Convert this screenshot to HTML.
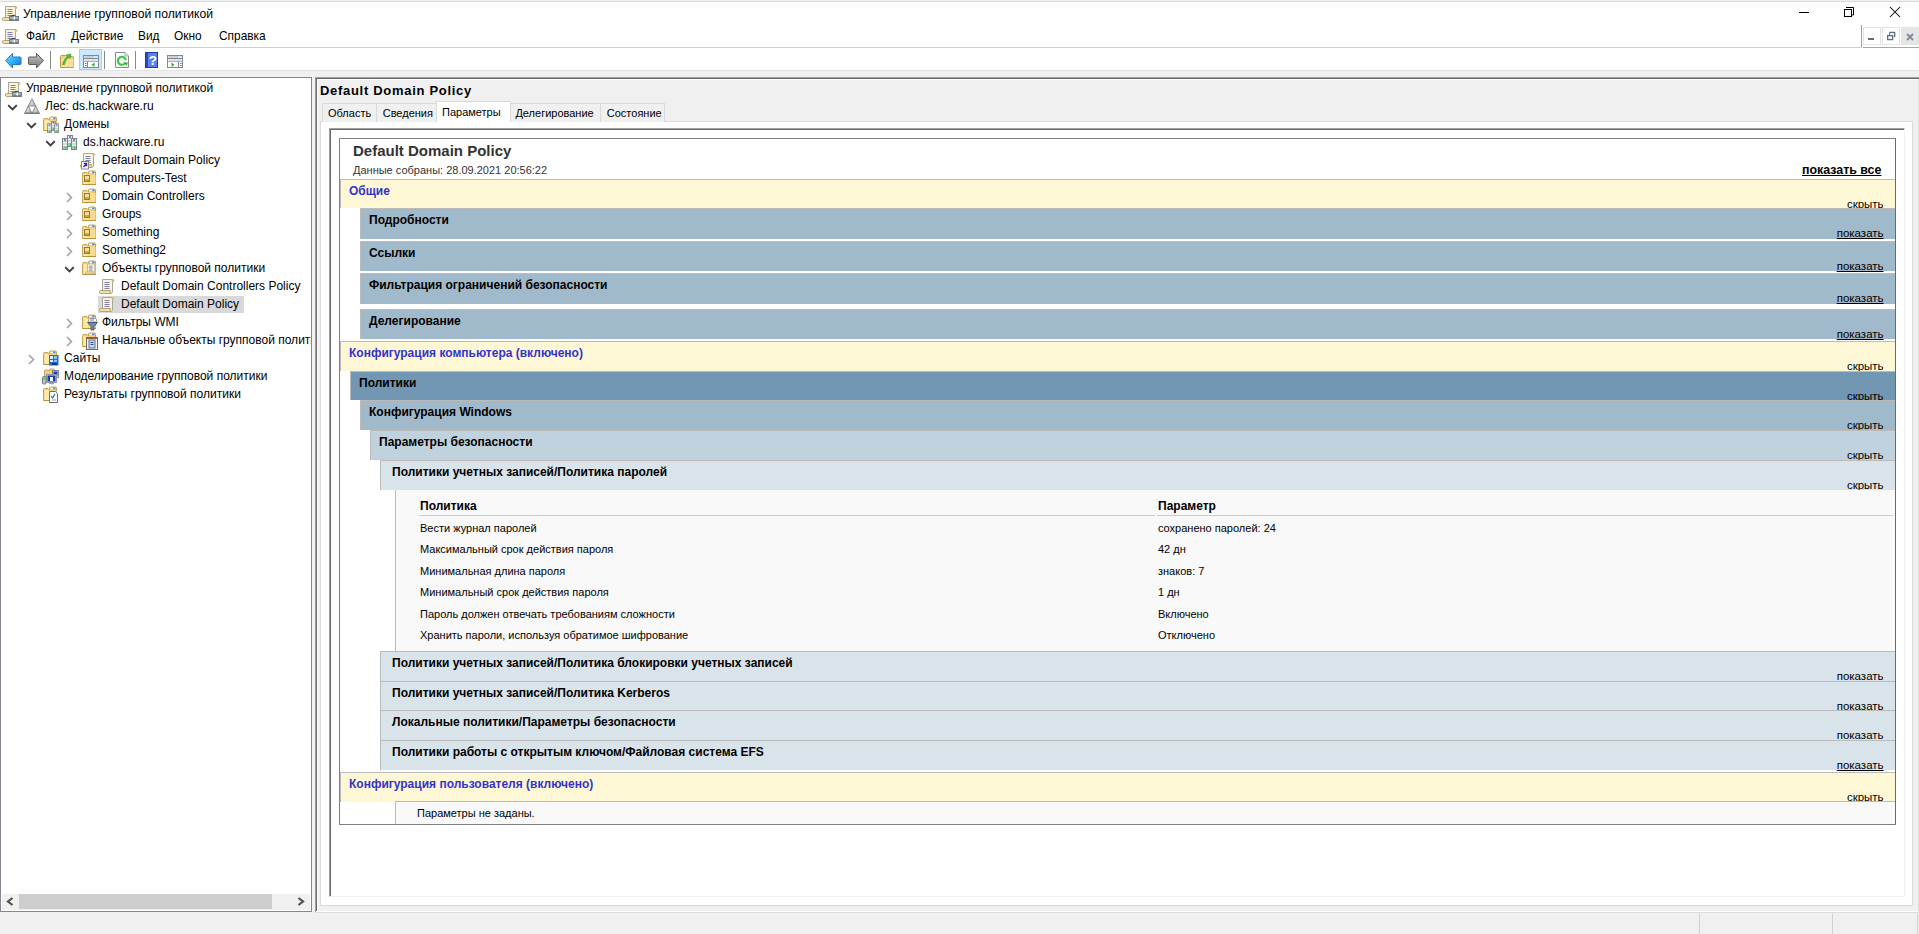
<!DOCTYPE html><html><head><meta charset="utf-8"><style>html,body{margin:0;padding:0}body{width:1919px;height:934px;overflow:hidden;position:relative;background:#f0f0f0;font-family:"Liberation Sans", sans-serif}.r{position:absolute;box-sizing:border-box}.t{position:absolute;white-space:nowrap}</style></head><body>
<div class="r" style="left:0px;top:0px;width:1919px;height:27px;background:#fff"></div>
<div class="r" style="left:0px;top:0px;width:1919px;height:1px;background:#f0f0f0"></div>
<div class="r" style="left:0px;top:1px;width:1919px;height:1px;background:#d9d9d9"></div>
<svg class="r" style="left:2px;top:5px" width="17" height="17" viewBox="0 0 17 17"><g transform="translate(0,1) scale(1.0)"><path d="M3.5 0.5h10l1 1.2-1 0.8v10.5l-1 1.5H3.5z" fill="#fbf3d6" stroke="#a9a69a"/><circle cx="14" cy="1.5" r="1.3" fill="#d2b86e"/><path d="M5.5 3.5h5M5.5 5.5h5M5.5 7.5h5M5.5 9.5h5" stroke="#8080a8" stroke-width="1"/><path d="M1.5 11.5h10l-0.5 1.5 0.5 1.5h-10q-1 0-1-1.5t1-1.5z" fill="#f2e2a6" stroke="#b3a276"/></g><path d="M9.5 11.5q2-2.5 4 0" stroke="#3a3a3a" stroke-width="1.2" fill="none"/><rect x="7" y="11" width="10" height="5" fill="#6f7d86"/><rect x="8" y="12" width="8" height="2" fill="#a6b2ba"/><rect x="11.5" y="11.5" width="1.5" height="3" fill="#fff"/></svg>
<div class="t" style="left:23px;top:7.27px;font-size:12.2px;line-height:15px;color:#000;">Управление групповой политикой</div>
<div class="r" style="left:1799px;top:12px;width:10px;height:1px;background:#000"></div>
<svg class="r" style="left:1843px;top:6px" width="12" height="12" viewBox="0 0 12 12"><rect x="1.5" y="3.5" width="7" height="7" fill="none" stroke="#000"/><path d="M3 1.5h7.5v7.5H8.5" fill="none" stroke="#000"/></svg>
<svg class="r" style="left:1889px;top:6px" width="12" height="12" viewBox="0 0 12 12"><path d="M1 1l10 10M11 1L1 11" stroke="#000" stroke-width="1.05"/></svg>
<div class="r" style="left:0px;top:27px;width:1919px;height:20px;background:#fff"></div>
<svg class="r" style="left:2px;top:28px" width="17" height="17" viewBox="0 0 17 17"><g transform="translate(0,1) scale(1.0)"><path d="M3.5 0.5h10l1 1.2-1 0.8v10.5l-1 1.5H3.5z" fill="#fbf3d6" stroke="#a9a69a"/><circle cx="14" cy="1.5" r="1.3" fill="#d2b86e"/><path d="M5.5 3.5h5M5.5 5.5h5M5.5 7.5h5M5.5 9.5h5" stroke="#8080a8" stroke-width="1"/><path d="M1.5 11.5h10l-0.5 1.5 0.5 1.5h-10q-1 0-1-1.5t1-1.5z" fill="#f2e2a6" stroke="#b3a276"/></g><path d="M9.5 11.5q2-2.5 4 0" stroke="#3a3a3a" stroke-width="1.2" fill="none"/><rect x="7" y="11" width="10" height="5" fill="#6f7d86"/><rect x="8" y="12" width="8" height="2" fill="#a6b2ba"/><rect x="11.5" y="11.5" width="1.5" height="3" fill="#fff"/></svg>
<div class="t" style="left:26px;top:29.38px;font-size:11.9px;line-height:15px;color:#000;">Файл</div>
<div class="t" style="left:71px;top:29.38px;font-size:11.9px;line-height:15px;color:#000;">Действие</div>
<div class="t" style="left:138px;top:29.38px;font-size:11.9px;line-height:15px;color:#000;">Вид</div>
<div class="t" style="left:174px;top:29.38px;font-size:11.9px;line-height:15px;color:#000;">Окно</div>
<div class="t" style="left:219px;top:29.38px;font-size:11.9px;line-height:15px;color:#000;">Справка</div>
<div class="r" style="left:0px;top:47px;width:1862px;height:1px;background:#cfcfcf"></div>
<div class="r" style="left:1861px;top:25px;width:1px;height:22px;background:#a0a0a0"></div>
<div class="r" style="left:1863px;top:47px;width:56px;height:1px;background:#a8a8a8"></div>
<div class="r" style="left:1863px;top:27px;width:18px;height:18px;border:1px solid #e3e3e3;background:#fff"></div>
<div class="r" style="left:1868px;top:38px;width:6px;height:2px;background:#5f6e7e"></div>
<div class="r" style="left:1882px;top:27px;width:18px;height:18px;border:1px solid #e3e3e3;background:#fff"></div>
<svg class="r" style="left:1886px;top:31px" width="10" height="10" viewBox="0 0 10 10"><rect x="1.6" y="4.6" width="5" height="4" fill="none" stroke="#5f6e7e" stroke-width="1.3"/><path d="M3.3 1.4h5.9M8.6 1.4v4.6" stroke="#5f6e7e" stroke-width="1.4"/><path d="M3.6 1.4v2.6" stroke="#5f6e7e" stroke-width="1.1"/></svg>
<div class="r" style="left:1901px;top:27px;width:18px;height:18px;background:#e5e5e5"></div>
<svg class="r" style="left:1906px;top:33px" width="8" height="8" viewBox="0 0 8 8"><path d="M1 1l6 6M7 1l-6 6" stroke="#7c8a98" stroke-width="1.8"/></svg>
<div class="r" style="left:0px;top:48px;width:1919px;height:22px;background:#fff"></div>
<div class="r" style="left:0px;top:70px;width:1919px;height:1px;background:#e3e3e3"></div>
<svg class="r" style="left:5px;top:53px" width="17" height="16" viewBox="0 0 17 16"><defs><linearGradient id="gb" x1="0" y1="0" x2="1" y2="1"><stop offset="0" stop-color="#8ad8ff"/><stop offset="0.5" stop-color="#30b0f8"/><stop offset="1" stop-color="#0a70d0"/></linearGradient></defs><path d="M0.5 7.5L7.5 0.5v3.5h8l0.5 0.5v6.5l-0.5 0.5h-8v3.5z" fill="url(#gb)" stroke="#2a78c0"/></svg>
<svg class="r" style="left:28px;top:53px" width="17" height="16" viewBox="0 0 17 16"><defs><linearGradient id="gf" x1="0" y1="0" x2="0" y2="1"><stop offset="0" stop-color="#c4c4c4"/><stop offset="1" stop-color="#7a7a7a"/></linearGradient></defs><path d="M15.5 7.5L8.5 0.5v3.5h-7.5l-0.5 0.5v6.5l0.5 0.5h7.5v3.5z" fill="url(#gf)" stroke="#5a5a5a"/></svg>
<div class="r" style="left:50px;top:51px;width:1px;height:18px;background:#8a8a8a"></div>
<svg class="r" style="left:60px;top:52px" width="16" height="17" viewBox="0 0 16 17"><path d="M0.5 15.5V4.5q0-1 1-1h4l1 1h6q1 0 1 1v10z" fill="#f3d080" stroke="#c09a48"/><rect x="1.5" y="7" width="12" height="8" fill="#fbe09a"/><path d="M2.5 12.5q1-5 5-8l-1.5-1.5 5-1-1 4.5-1.2-1.2q-3.5 2.5-4.3 7.2z" fill="#46c846" stroke="#2a9a2a" stroke-width="0.6"/></svg>
<div class="r" style="left:79px;top:49px;width:23px;height:21px;background:#cce8ff;border:1px solid #99d1ff"></div>
<svg class="r" style="left:83px;top:55px" width="16" height="13" viewBox="0 0 16 13"><rect x="0.5" y="0.5" width="15" height="12" fill="#fff" stroke="#7f8894"/><path d="M1.5 2h10" stroke="#b8c0c8" stroke-width="1.5"/><path d="M12.5 2h1M14 2h0.5" stroke="#b8c0c8" stroke-width="1.5"/><path d="M0.5 3.5h15" stroke="#7f8894"/><path d="M1.5 5h13" stroke="#c8d0d8" stroke-width="1.2"/><path d="M0.5 6.5h15" stroke="#aab2ba"/><path d="M4.5 6.5v6" stroke="#7f8894"/><path d="M2 8.5h1.5M2 10.5h1.5" stroke="#3a78c8" stroke-width="1.2"/><path d="M11.5 7.5v4.5L8.5 9.75z" fill="#34b034"/></svg>
<div class="r" style="left:104px;top:51px;width:1px;height:18px;background:#8a8a8a"></div>
<svg class="r" style="left:115px;top:52px" width="14" height="16" viewBox="0 0 14 16"><path d="M0.5 0.5h9.5l3.5 3.5v11.5H0.5z" fill="#fafafa" stroke="#8a8a8a"/><path d="M10 0.5v3.5h3.5" fill="#e8e8e8" stroke="#aaa"/><path d="M10.2 11a4 4 0 1 1 0.6-3" fill="none" stroke="#3cc83c" stroke-width="2.2"/><path d="M8.5 10.5h4.5l-1.5 3z" fill="#2aa82a"/></svg>
<div class="r" style="left:135px;top:51px;width:1px;height:18px;background:#8a8a8a"></div>
<svg class="r" style="left:145px;top:52px" width="13" height="16" viewBox="0 0 13 16"><rect width="13" height="16" fill="#1c3aa8"/><rect x="3" y="1" width="9" height="14" fill="#5b80e8"/><rect x="1" y="1" width="2" height="14" fill="#2a4ab8"/><text x="7.8" y="13.2" font-size="13.5" font-family="Liberation Sans" font-weight="bold" fill="#fff" text-anchor="middle">?</text></svg>
<svg class="r" style="left:167px;top:55px" width="16" height="13" viewBox="0 0 16 13"><rect x="0.5" y="0.5" width="15" height="12" fill="#fff" stroke="#7f8894"/><path d="M1.5 2h10" stroke="#b8c0c8" stroke-width="1.5"/><path d="M12.5 2h1M14 2h0.5" stroke="#b8c0c8" stroke-width="1.5"/><path d="M0.5 3.5h15" stroke="#7f8894"/><path d="M1.5 5h13" stroke="#c8d0d8" stroke-width="1.2"/><path d="M0.5 6.5h15" stroke="#aab2ba"/><path d="M11.5 6.5v6" stroke="#7f8894"/><path d="M13 8.5h1.5M13 10.5h1.5" stroke="#3a78c8" stroke-width="1.2"/><path d="M4.5 7.5v4.5l3-2.25z" fill="#34b034"/></svg>
<div class="r" style="left:0px;top:77px;width:312px;height:835px;background:#fff;border:1px solid #828790"></div>
<div class="r" style="left:2px;top:894px;width:308px;height:16px;background:#f0f0f0"></div>
<div class="r" style="left:19px;top:894px;width:253px;height:15px;background:#cdcdcd"></div>
<svg class="r" style="left:6px;top:897px" width="8" height="9" viewBox="0 0 8 9"><path d="M6.5 1L2 4.5 6.5 8" stroke="#505050" stroke-width="2.2" fill="none"/></svg>
<svg class="r" style="left:297px;top:897px" width="8" height="9" viewBox="0 0 8 9"><path d="M1.5 1L6 4.5 1.5 8" stroke="#505050" stroke-width="2.2" fill="none"/></svg>
<div class="r" style="left:1px;top:78px;width:310px;height:815px;overflow:hidden">
</div>
<svg class="r" style="left:5px;top:81px" width="17" height="17" viewBox="0 0 17 17"><g transform="translate(0,1) scale(1.0)"><path d="M3.5 0.5h10l1 1.2-1 0.8v10.5l-1 1.5H3.5z" fill="#fbf3d6" stroke="#a9a69a"/><circle cx="14" cy="1.5" r="1.3" fill="#d2b86e"/><path d="M5.5 3.5h5M5.5 5.5h5M5.5 7.5h5M5.5 9.5h5" stroke="#8080a8" stroke-width="1"/><path d="M1.5 11.5h10l-0.5 1.5 0.5 1.5h-10q-1 0-1-1.5t1-1.5z" fill="#f2e2a6" stroke="#b3a276"/></g><path d="M9.5 11.5q2-2.5 4 0" stroke="#3a3a3a" stroke-width="1.2" fill="none"/><rect x="7" y="11" width="10" height="5" fill="#6f7d86"/><rect x="8" y="12" width="8" height="2" fill="#a6b2ba"/><rect x="11.5" y="11.5" width="1.5" height="3" fill="#fff"/></svg>
<div class="t" style="left:26px;top:81.04px;font-size:12px;line-height:15px;color:#000;">Управление групповой политикой</div>
<svg class="r" style="left:7px;top:104px" width="11" height="7" viewBox="0 0 11 7"><path d="M1.2 1.2l4.3 4.3 4.3-4.3" stroke="#3c3c3c" stroke-width="1.9" fill="none"/></svg>
<svg class="r" style="left:24px;top:98px" width="16" height="16" viewBox="0 0 16 16"><defs><linearGradient id="gt" x1="0" y1="0" x2="1" y2="1"><stop offset="0" stop-color="#f8f8f8"/><stop offset="1" stop-color="#a8a8a8"/></linearGradient></defs><path d="M8 0.8L11.8 8H4.2z" fill="url(#gt)" stroke="#8a8a8a"/><path d="M4.2 8L8 15.3H0.6z" fill="url(#gt)" stroke="#8a8a8a"/><path d="M11.8 8L15.4 15.3H8z" fill="url(#gt)" stroke="#8a8a8a"/><path d="M0.6 15.3h14.8" stroke="#707070" stroke-width="1.2"/></svg>
<div class="t" style="left:45px;top:99.04px;font-size:12px;line-height:15px;color:#000;">Лес: ds.hackware.ru</div>
<svg class="r" style="left:26px;top:122px" width="11" height="7" viewBox="0 0 11 7"><path d="M1.2 1.2l4.3 4.3 4.3-4.3" stroke="#3c3c3c" stroke-width="1.9" fill="none"/></svg>
<svg class="r" style="left:42px;top:116px" width="18" height="18" viewBox="0 0 18 18"><path d="M1.5 13.5V3.5q0-1 1-1h3.5l1.5 1.5V2q0-1 1-1h5q1 0 1 1v12.5H1.5z" fill="#f0cf7e" stroke="#c9a457"/><rect x="8.5" y="1.8" width="3" height="1.2" fill="#fff"/><rect x="11" y="1.6" width="2.5" height="1.6" rx="0.8" fill="#4a90e8"/><path d="M2.5 4v10h5V5.5L6 4z" fill="#fde9a8"/><rect x="7" y="5" width="7.5" height="9" fill="#f9db8e"/><path d="M1.5 14.5h13.5" stroke="#b8923e"/><g transform="translate(5,5) scale(0.8)"><rect x="5.5" y="0.5" width="5" height="11" fill="#b9c1c8" stroke="#7a848c"/><rect x="6" y="1" width="4" height="2" fill="#e6eaee"/><rect x="7" y="1.5" width="2" height="1" fill="#1e2a34"/><rect x="6" y="4" width="4" height="1.5" fill="#f6f8fa"/><rect x="6" y="6.5" width="4" height="1.5" fill="#f0f2f4"/><rect x="7.5" y="8.5" width="2" height="2" fill="#22e022"/><rect x="0.5" y="3.5" width="5" height="11" fill="#b9c1c8" stroke="#7a848c"/><rect x="1" y="4" width="4" height="2" fill="#e6eaee"/><rect x="2" y="4.5" width="2" height="1" fill="#1e2a34"/><rect x="1" y="7" width="4" height="1.5" fill="#f6f8fa"/><rect x="1" y="9.5" width="4" height="1.5" fill="#f0f2f4"/><rect x="2.5" y="11.5" width="2" height="2" fill="#22e022"/><rect x="9.5" y="3.5" width="5" height="11" fill="#b9c1c8" stroke="#7a848c"/><rect x="10" y="4" width="4" height="2" fill="#e6eaee"/><rect x="11" y="4.5" width="2" height="1" fill="#1e2a34"/><rect x="10" y="7" width="4" height="1.5" fill="#f6f8fa"/><rect x="10" y="9.5" width="4" height="1.5" fill="#f0f2f4"/><rect x="11.5" y="11.5" width="2" height="2" fill="#22e022"/></g></svg>
<div class="t" style="left:64px;top:117.04px;font-size:12px;line-height:15px;color:#000;">Домены</div>
<svg class="r" style="left:45px;top:140px" width="11" height="7" viewBox="0 0 11 7"><path d="M1.2 1.2l4.3 4.3 4.3-4.3" stroke="#3c3c3c" stroke-width="1.9" fill="none"/></svg>
<svg class="r" style="left:62px;top:135px" width="16" height="16" viewBox="0 0 16 16"><g transform="translate(0,0) scale(1)"><rect x="5.5" y="0.5" width="5" height="11" fill="#b9c1c8" stroke="#7a848c"/><rect x="6" y="1" width="4" height="2" fill="#e6eaee"/><rect x="7" y="1.5" width="2" height="1" fill="#1e2a34"/><rect x="6" y="4" width="4" height="1.5" fill="#f6f8fa"/><rect x="6" y="6.5" width="4" height="1.5" fill="#f0f2f4"/><rect x="7.5" y="8.5" width="2" height="2" fill="#22e022"/><rect x="0.5" y="3.5" width="5" height="11" fill="#b9c1c8" stroke="#7a848c"/><rect x="1" y="4" width="4" height="2" fill="#e6eaee"/><rect x="2" y="4.5" width="2" height="1" fill="#1e2a34"/><rect x="1" y="7" width="4" height="1.5" fill="#f6f8fa"/><rect x="1" y="9.5" width="4" height="1.5" fill="#f0f2f4"/><rect x="2.5" y="11.5" width="2" height="2" fill="#22e022"/><rect x="9.5" y="3.5" width="5" height="11" fill="#b9c1c8" stroke="#7a848c"/><rect x="10" y="4" width="4" height="2" fill="#e6eaee"/><rect x="11" y="4.5" width="2" height="1" fill="#1e2a34"/><rect x="10" y="7" width="4" height="1.5" fill="#f6f8fa"/><rect x="10" y="9.5" width="4" height="1.5" fill="#f0f2f4"/><rect x="11.5" y="11.5" width="2" height="2" fill="#22e022"/></g></svg>
<div class="t" style="left:83px;top:135.04px;font-size:12px;line-height:15px;color:#000;">ds.hackware.ru</div>
<svg class="r" style="left:80px;top:153px" width="17" height="17" viewBox="0 0 17 17"><g transform="translate(0,0) scale(1.0)"><path d="M3.5 0.5h10l1 1.2-1 0.8v10.5l-1 1.5H3.5z" fill="#fbf3d6" stroke="#a9a69a"/><circle cx="14" cy="1.5" r="1.3" fill="#d2b86e"/><path d="M5.5 3.5h5M5.5 5.5h5M5.5 7.5h5M5.5 9.5h5" stroke="#8080a8" stroke-width="1"/><path d="M1.5 11.5h10l-0.5 1.5 0.5 1.5h-10q-1 0-1-1.5t1-1.5z" fill="#f2e2a6" stroke="#b3a276"/></g><rect x="1.5" y="8.5" width="7" height="7.5" fill="#fff" stroke="#8a8a8a"/><path d="M3.5 14l3-3M3.8 10.5h2.7v2.7" stroke="#2c2c9a" stroke-width="1.5" fill="none"/></svg>
<div class="t" style="left:102px;top:153.04px;font-size:12px;line-height:15px;color:#000;">Default Domain Policy</div>
<svg class="r" style="left:81px;top:170px" width="18" height="18" viewBox="0 0 18 18"><path d="M1.5 13.5V3.5q0-1 1-1h3.5l1.5 1.5V2q0-1 1-1h5q1 0 1 1v12.5H1.5z" fill="#f0cf7e" stroke="#c9a457"/><rect x="8.5" y="1.8" width="3" height="1.2" fill="#fff"/><rect x="11" y="1.6" width="2.5" height="1.6" rx="0.8" fill="#4a90e8"/><path d="M2.5 4v10h5V5.5L6 4z" fill="#fde9a8"/><rect x="7" y="5" width="7.5" height="9" fill="#f9db8e"/><path d="M1.5 14.5h13.5" stroke="#b8923e"/><rect x="3.5" y="5.5" width="5" height="6" fill="#c9a640" stroke="#9a7a28"/><rect x="4" y="6" width="4" height="3" fill="#efe2a0"/></svg>
<div class="t" style="left:102px;top:171.04px;font-size:12px;line-height:15px;color:#000;">Computers-Test</div>
<svg class="r" style="left:66px;top:192px" width="7" height="11" viewBox="0 0 7 11"><path d="M1 1l4.5 4.5L1 10" stroke="#a0a0a0" stroke-width="1.5" fill="none"/></svg>
<svg class="r" style="left:81px;top:188px" width="18" height="18" viewBox="0 0 18 18"><path d="M1.5 13.5V3.5q0-1 1-1h3.5l1.5 1.5V2q0-1 1-1h5q1 0 1 1v12.5H1.5z" fill="#f0cf7e" stroke="#c9a457"/><rect x="8.5" y="1.8" width="3" height="1.2" fill="#fff"/><rect x="11" y="1.6" width="2.5" height="1.6" rx="0.8" fill="#4a90e8"/><path d="M2.5 4v10h5V5.5L6 4z" fill="#fde9a8"/><rect x="7" y="5" width="7.5" height="9" fill="#f9db8e"/><path d="M1.5 14.5h13.5" stroke="#b8923e"/><rect x="3.5" y="5.5" width="5" height="6" fill="#c9a640" stroke="#9a7a28"/><rect x="4" y="6" width="4" height="3" fill="#efe2a0"/></svg>
<div class="t" style="left:102px;top:189.04px;font-size:12px;line-height:15px;color:#000;">Domain Controllers</div>
<svg class="r" style="left:66px;top:210px" width="7" height="11" viewBox="0 0 7 11"><path d="M1 1l4.5 4.5L1 10" stroke="#a0a0a0" stroke-width="1.5" fill="none"/></svg>
<svg class="r" style="left:81px;top:206px" width="18" height="18" viewBox="0 0 18 18"><path d="M1.5 13.5V3.5q0-1 1-1h3.5l1.5 1.5V2q0-1 1-1h5q1 0 1 1v12.5H1.5z" fill="#f0cf7e" stroke="#c9a457"/><rect x="8.5" y="1.8" width="3" height="1.2" fill="#fff"/><rect x="11" y="1.6" width="2.5" height="1.6" rx="0.8" fill="#4a90e8"/><path d="M2.5 4v10h5V5.5L6 4z" fill="#fde9a8"/><rect x="7" y="5" width="7.5" height="9" fill="#f9db8e"/><path d="M1.5 14.5h13.5" stroke="#b8923e"/><rect x="3.5" y="5.5" width="5" height="6" fill="#c9a640" stroke="#9a7a28"/><rect x="4" y="6" width="4" height="3" fill="#efe2a0"/></svg>
<div class="t" style="left:102px;top:207.04px;font-size:12px;line-height:15px;color:#000;">Groups</div>
<svg class="r" style="left:66px;top:228px" width="7" height="11" viewBox="0 0 7 11"><path d="M1 1l4.5 4.5L1 10" stroke="#a0a0a0" stroke-width="1.5" fill="none"/></svg>
<svg class="r" style="left:81px;top:224px" width="18" height="18" viewBox="0 0 18 18"><path d="M1.5 13.5V3.5q0-1 1-1h3.5l1.5 1.5V2q0-1 1-1h5q1 0 1 1v12.5H1.5z" fill="#f0cf7e" stroke="#c9a457"/><rect x="8.5" y="1.8" width="3" height="1.2" fill="#fff"/><rect x="11" y="1.6" width="2.5" height="1.6" rx="0.8" fill="#4a90e8"/><path d="M2.5 4v10h5V5.5L6 4z" fill="#fde9a8"/><rect x="7" y="5" width="7.5" height="9" fill="#f9db8e"/><path d="M1.5 14.5h13.5" stroke="#b8923e"/><rect x="3.5" y="5.5" width="5" height="6" fill="#c9a640" stroke="#9a7a28"/><rect x="4" y="6" width="4" height="3" fill="#efe2a0"/></svg>
<div class="t" style="left:102px;top:225.04px;font-size:12px;line-height:15px;color:#000;">Something</div>
<svg class="r" style="left:66px;top:246px" width="7" height="11" viewBox="0 0 7 11"><path d="M1 1l4.5 4.5L1 10" stroke="#a0a0a0" stroke-width="1.5" fill="none"/></svg>
<svg class="r" style="left:81px;top:242px" width="18" height="18" viewBox="0 0 18 18"><path d="M1.5 13.5V3.5q0-1 1-1h3.5l1.5 1.5V2q0-1 1-1h5q1 0 1 1v12.5H1.5z" fill="#f0cf7e" stroke="#c9a457"/><rect x="8.5" y="1.8" width="3" height="1.2" fill="#fff"/><rect x="11" y="1.6" width="2.5" height="1.6" rx="0.8" fill="#4a90e8"/><path d="M2.5 4v10h5V5.5L6 4z" fill="#fde9a8"/><rect x="7" y="5" width="7.5" height="9" fill="#f9db8e"/><path d="M1.5 14.5h13.5" stroke="#b8923e"/><rect x="3.5" y="5.5" width="5" height="6" fill="#c9a640" stroke="#9a7a28"/><rect x="4" y="6" width="4" height="3" fill="#efe2a0"/></svg>
<div class="t" style="left:102px;top:243.04px;font-size:12px;line-height:15px;color:#000;">Something2</div>
<svg class="r" style="left:64px;top:266px" width="11" height="7" viewBox="0 0 11 7"><path d="M1.2 1.2l4.3 4.3 4.3-4.3" stroke="#3c3c3c" stroke-width="1.9" fill="none"/></svg>
<svg class="r" style="left:81px;top:260px" width="18" height="18" viewBox="0 0 18 18"><path d="M1.5 13.5V3.5q0-1 1-1h3.5l1.5 1.5V2q0-1 1-1h5q1 0 1 1v12.5H1.5z" fill="#f0cf7e" stroke="#c9a457"/><rect x="8.5" y="1.8" width="3" height="1.2" fill="#fff"/><rect x="11" y="1.6" width="2.5" height="1.6" rx="0.8" fill="#4a90e8"/><path d="M2.5 4v10h5V5.5L6 4z" fill="#fde9a8"/><rect x="7" y="5" width="7.5" height="9" fill="#f9db8e"/><path d="M1.5 14.5h13.5" stroke="#b8923e"/><g transform="translate(4,3.5) scale(0.72)"><path d="M3.5 0.5h10l1 1.2-1 0.8v10.5l-1 1.5H3.5z" fill="#fbf3d6" stroke="#a9a69a"/><circle cx="14" cy="1.5" r="1.3" fill="#d2b86e"/><path d="M5.5 3.5h5M5.5 5.5h5M5.5 7.5h5M5.5 9.5h5" stroke="#8080a8" stroke-width="1"/><path d="M1.5 11.5h10l-0.5 1.5 0.5 1.5h-10q-1 0-1-1.5t1-1.5z" fill="#f2e2a6" stroke="#b3a276"/></g></svg>
<div class="t" style="left:102px;top:261.04px;font-size:12px;line-height:15px;color:#000;">Объекты групповой политики</div>
<svg class="r" style="left:99px;top:279px" width="17" height="17" viewBox="0 0 17 17"><g transform="translate(0,0) scale(1.0)"><path d="M3.5 0.5h10l1 1.2-1 0.8v10.5l-1 1.5H3.5z" fill="#fbf3d6" stroke="#a9a69a"/><circle cx="14" cy="1.5" r="1.3" fill="#d2b86e"/><path d="M5.5 3.5h5M5.5 5.5h5M5.5 7.5h5M5.5 9.5h5" stroke="#8080a8" stroke-width="1"/><path d="M1.5 11.5h10l-0.5 1.5 0.5 1.5h-10q-1 0-1-1.5t1-1.5z" fill="#f2e2a6" stroke="#b3a276"/></g></svg>
<div class="t" style="left:121px;top:279.04px;font-size:12px;line-height:15px;color:#000;">Default Domain Controllers Policy</div>
<div class="r" style="left:98px;top:296px;width:146px;height:17px;background:#d9d9d9"></div>
<svg class="r" style="left:99px;top:297px" width="17" height="17" viewBox="0 0 17 17"><g transform="translate(0,0) scale(1.0)"><path d="M3.5 0.5h10l1 1.2-1 0.8v10.5l-1 1.5H3.5z" fill="#fbf3d6" stroke="#a9a69a"/><circle cx="14" cy="1.5" r="1.3" fill="#d2b86e"/><path d="M5.5 3.5h5M5.5 5.5h5M5.5 7.5h5M5.5 9.5h5" stroke="#8080a8" stroke-width="1"/><path d="M1.5 11.5h10l-0.5 1.5 0.5 1.5h-10q-1 0-1-1.5t1-1.5z" fill="#f2e2a6" stroke="#b3a276"/></g></svg>
<div class="t" style="left:121px;top:297.04px;font-size:12px;line-height:15px;color:#000;">Default Domain Policy</div>
<svg class="r" style="left:66px;top:318px" width="7" height="11" viewBox="0 0 7 11"><path d="M1 1l4.5 4.5L1 10" stroke="#a0a0a0" stroke-width="1.5" fill="none"/></svg>
<svg class="r" style="left:81px;top:314px" width="18" height="18" viewBox="0 0 18 18"><path d="M1.5 13.5V3.5q0-1 1-1h3.5l1.5 1.5V2q0-1 1-1h5q1 0 1 1v12.5H1.5z" fill="#f0cf7e" stroke="#c9a457"/><rect x="8.5" y="1.8" width="3" height="1.2" fill="#fff"/><rect x="11" y="1.6" width="2.5" height="1.6" rx="0.8" fill="#4a90e8"/><path d="M2.5 4v10h5V5.5L6 4z" fill="#fde9a8"/><rect x="7" y="5" width="7.5" height="9" fill="#f9db8e"/><path d="M1.5 14.5h13.5" stroke="#b8923e"/><rect x="7.5" y="4.5" width="8" height="3.5" rx="1" fill="#fbf8ee" stroke="#9a9a9a"/><path d="M9 6h4" stroke="#8080a8"/><path d="M6.5 8.5h10l-3.5 4v3.5h-3v-3.5z" fill="#6f8ca8" stroke="#4a5e74"/></svg>
<div class="t" style="left:102px;top:315.04px;font-size:12px;line-height:15px;color:#000;">Фильтры WMI</div>
<svg class="r" style="left:66px;top:336px" width="7" height="11" viewBox="0 0 7 11"><path d="M1 1l4.5 4.5L1 10" stroke="#a0a0a0" stroke-width="1.5" fill="none"/></svg>
<svg class="r" style="left:81px;top:332px" width="18" height="18" viewBox="0 0 18 18"><path d="M1.5 13.5V3.5q0-1 1-1h3.5l1.5 1.5V2q0-1 1-1h5q1 0 1 1v12.5H1.5z" fill="#f0cf7e" stroke="#c9a457"/><rect x="8.5" y="1.8" width="3" height="1.2" fill="#fff"/><rect x="11" y="1.6" width="2.5" height="1.6" rx="0.8" fill="#4a90e8"/><path d="M2.5 4v10h5V5.5L6 4z" fill="#fde9a8"/><rect x="7" y="5" width="7.5" height="9" fill="#f9db8e"/><path d="M1.5 14.5h13.5" stroke="#b8923e"/><rect x="5.5" y="5.5" width="11" height="12" fill="#f4f4f4" stroke="#6a6a6a"/><rect x="5" y="5" width="12" height="2" fill="#9a5a44"/><rect x="8" y="8" width="6" height="8" fill="#c8dcf0" stroke="#5a7090"/><path d="M9.5 10.5h3M9.5 12.5h3" stroke="#2a5090" stroke-width="1.2"/></svg>
<div class="t" style="left:102px;top:333.04px;font-size:12px;line-height:15px;color:#000;">Начальные объекты групповой политики</div>
<svg class="r" style="left:28px;top:354px" width="7" height="11" viewBox="0 0 7 11"><path d="M1 1l4.5 4.5L1 10" stroke="#a0a0a0" stroke-width="1.5" fill="none"/></svg>
<svg class="r" style="left:42px;top:350px" width="18" height="18" viewBox="0 0 18 18"><path d="M1.5 13.5V3.5q0-1 1-1h3.5l1.5 1.5V2q0-1 1-1h5q1 0 1 1v12.5H1.5z" fill="#f0cf7e" stroke="#c9a457"/><rect x="8.5" y="1.8" width="3" height="1.2" fill="#fff"/><rect x="11" y="1.6" width="2.5" height="1.6" rx="0.8" fill="#4a90e8"/><path d="M2.5 4v10h5V5.5L6 4z" fill="#fde9a8"/><rect x="7" y="5" width="7.5" height="9" fill="#f9db8e"/><path d="M1.5 14.5h13.5" stroke="#b8923e"/><rect x="7" y="5" width="9.5" height="10.5" fill="#1c6fd0"/><rect x="8" y="6" width="3" height="3" fill="#d8ecff"/><rect x="12" y="6" width="3" height="3" fill="#8fc0f0"/><rect x="8" y="10" width="3" height="2" fill="#d8ecff"/><rect x="12" y="10" width="3" height="2" fill="#8fc0f0"/><rect x="10" y="13" width="5" height="2" fill="#0a3a90"/></svg>
<div class="t" style="left:64px;top:351.04px;font-size:12px;line-height:15px;color:#000;">Сайты</div>
<svg class="r" style="left:42px;top:368px" width="18" height="17" viewBox="0 0 18 17"><path d="M2.5 9V3q0-1 1-1h3l1 1V2q0-1 1-1h3q1 0 1 1v7z" fill="#f0cf7e" stroke="#c9a457"/><rect x="10.5" y="2.5" width="6" height="7" fill="#cfd8e4" stroke="#7a8694"/><rect x="11.5" y="3.5" width="4" height="4" fill="#1c3ab8"/><rect x="4.5" y="6.5" width="10" height="8" fill="#d4dce6" stroke="#8a96a4"/><rect x="5.5" y="7.5" width="8" height="6" fill="#1838c0"/><rect x="8" y="9" width="3" height="4" fill="#fff"/><path d="M7 15.5h5" stroke="#9aa4ae" stroke-width="1.5"/><rect x="0.5" y="8.5" width="3.5" height="7.5" rx="1" fill="#c0c4c8" stroke="#7a7e84"/><rect x="1" y="9.5" width="2.5" height="2" fill="#30e030"/></svg>
<div class="t" style="left:64px;top:369.04px;font-size:12px;line-height:15px;color:#000;">Моделирование групповой политики</div>
<svg class="r" style="left:42px;top:386px" width="18" height="18" viewBox="0 0 18 18"><path d="M1.5 13.5V3.5q0-1 1-1h3.5l1.5 1.5V2q0-1 1-1h5q1 0 1 1v12.5H1.5z" fill="#f0cf7e" stroke="#c9a457"/><rect x="8.5" y="1.8" width="3" height="1.2" fill="#fff"/><rect x="11" y="1.6" width="2.5" height="1.6" rx="0.8" fill="#4a90e8"/><path d="M2.5 4v10h5V5.5L6 4z" fill="#fde9a8"/><rect x="7" y="5" width="7.5" height="9" fill="#f9db8e"/><path d="M1.5 14.5h13.5" stroke="#b8923e"/><path d="M7.5 5.5h6l2 2v9h-8z" fill="#fff" stroke="#6e6e6e"/><path d="M9 10l1.5 2 2.5-4" stroke="#1e64c8" stroke-width="1.2" fill="none"/><path d="M10 14h4" stroke="#9a9ac0"/></svg>
<div class="t" style="left:64px;top:387.04px;font-size:12px;line-height:15px;color:#000;">Результаты групповой политики</div>
<div class="r" style="left:312px;top:77px;width:3px;height:836px;background:#f0f0f0"></div>
<div class="r" style="left:311px;top:77px;width:1px;height:835px;background:#828790"></div>
<div class="r" style="left:315px;top:77px;width:1604px;height:836px;background:#f0f0f0;border-left:1px solid #a0a0a0;border-top:1px solid #a0a0a0"></div>
<div class="r" style="left:316px;top:78px;width:1603px;height:1px;background:#696969"></div>
<div class="r" style="left:316px;top:78px;width:1px;height:833px;background:#696969"></div>
<div class="r" style="left:317px;top:79px;width:1602px;height:1px;background:#fff"></div>
<div class="r" style="left:317px;top:79px;width:1px;height:832px;background:#fff"></div>
<div class="r" style="left:316px;top:911px;width:1603px;height:1px;background:#fff"></div>
<div class="r" style="left:315px;top:912px;width:1604px;height:1px;background:#dcdcdc"></div>
<div class="r" style="left:1918px;top:79px;width:1px;height:833px;background:#e2e2e2"></div>
<div class="t" style="left:320px;top:83.10px;font-size:13px;line-height:16px;font-weight:bold;color:#000;letter-spacing:0.7px">Default Domain Policy</div>
<div class="r" style="left:320px;top:121px;width:1593px;height:785px;background:#fff;border:1px solid #dadada"></div>
<div class="r" style="left:322px;top:103px;width:55px;height:19px;background:#f0f0f0;border:1px solid #dadada;border-bottom:none"></div>
<div class="t" style="left:328px;top:105.99px;font-size:11px;line-height:14px;color:#000;">Область</div>
<div class="r" style="left:376px;top:103px;width:61px;height:19px;background:#f0f0f0;border:1px solid #dadada;border-bottom:none"></div>
<div class="t" style="left:382.7px;top:105.99px;font-size:11px;line-height:14px;color:#000;">Сведения</div>
<div class="r" style="left:436px;top:101px;width:75px;height:21px;background:#fff;border:1px solid #dadada;border-bottom:none"></div>
<div class="t" style="left:442px;top:104.59px;font-size:11px;line-height:14px;color:#000;">Параметры</div>
<div class="r" style="left:510px;top:103px;width:91px;height:19px;background:#f0f0f0;border:1px solid #dadada;border-bottom:none"></div>
<div class="t" style="left:515.4px;top:105.99px;font-size:11px;line-height:14px;color:#000;">Делегирование</div>
<div class="r" style="left:600px;top:103px;width:65px;height:19px;background:#f0f0f0;border:1px solid #dadada;border-bottom:none"></div>
<div class="t" style="left:606.8px;top:105.99px;font-size:11px;line-height:14px;color:#000;">Состояние</div>
<div class="r" style="left:329px;top:128px;width:1576px;height:769px;background:#fff;border-left:1px solid #a0a0a0;border-top:1px solid #a0a0a0;border-right:1px solid #f0f0f0;border-bottom:1px solid #f0f0f0"></div>
<div class="r" style="left:330px;top:129px;width:1574px;height:1px;background:#696969"></div>
<div class="r" style="left:330px;top:129px;width:1px;height:767px;background:#696969"></div>
<div class="r" style="left:339px;top:138px;width:1557px;height:687px;background:#fff;border:1px solid #808080;border-right-color:#6a6a6a"></div>
<div class="t" style="left:353px;top:141.10px;font-size:15px;line-height:19px;font-weight:bold;color:#333;">Default Domain Policy</div>
<div class="t" style="left:353px;top:162.89px;font-size:11px;line-height:14px;color:#333;">Данные собраны: 28.09.2021 20:56:22</div>
<div class="t" style="left:1802px;top:162.20px;font-size:12.4px;line-height:16px;font-weight:bold;color:#000;text-decoration:underline">показать все</div>
<div class="r" style="left:340px;top:179px;width:1555px;height:29px;background:#fef7d6;border-top:1px solid #bbb;border-left:1px solid #bbb"></div>
<div class="t" style="left:349px;top:183.64px;font-size:12px;line-height:15px;font-weight:bold;color:#3333cc;">Общие</div>
<div class="t" style="left:1846.9px;top:196.52px;font-size:11.5px;line-height:14px;color:#000;">скрыть</div>
<div class="r" style="left:360px;top:208px;width:1535px;height:31px;background:#a0bacb;border-top:1px solid #bbb;border-left:1px solid #bbb"></div>
<div class="t" style="left:369px;top:212.64px;font-size:12px;line-height:15px;font-weight:bold;color:#000;">Подробности</div>
<div class="t" style="left:1836.7px;top:225.52px;font-size:11.5px;line-height:14px;color:#000;text-decoration:underline">показать</div>
<div class="r" style="left:360px;top:241px;width:1535px;height:30px;background:#a0bacb;border-top:1px solid #bbb;border-left:1px solid #bbb"></div>
<div class="t" style="left:369px;top:245.64px;font-size:12px;line-height:15px;font-weight:bold;color:#000;">Ссылки</div>
<div class="t" style="left:1836.7px;top:258.52px;font-size:11.5px;line-height:14px;color:#000;text-decoration:underline">показать</div>
<div class="r" style="left:360px;top:273px;width:1535px;height:31px;background:#a0bacb;border-top:1px solid #bbb;border-left:1px solid #bbb"></div>
<div class="t" style="left:369px;top:277.64px;font-size:12px;line-height:15px;font-weight:bold;color:#000;">Фильтрация ограничений безопасности</div>
<div class="t" style="left:1836.7px;top:290.52px;font-size:11.5px;line-height:14px;color:#000;text-decoration:underline">показать</div>
<div class="r" style="left:360px;top:309px;width:1535px;height:30px;background:#a0bacb;border-top:1px solid #bbb;border-left:1px solid #bbb"></div>
<div class="t" style="left:369px;top:313.64px;font-size:12px;line-height:15px;font-weight:bold;color:#000;">Делегирование</div>
<div class="t" style="left:1836.7px;top:326.52px;font-size:11.5px;line-height:14px;color:#000;text-decoration:underline">показать</div>
<div class="r" style="left:340px;top:341px;width:1555px;height:30px;background:#fef7d6;border-top:1px solid #bbb;border-left:1px solid #bbb"></div>
<div class="t" style="left:349px;top:345.64px;font-size:12px;line-height:15px;font-weight:bold;color:#3333cc;">Конфигурация компьютера (включено)</div>
<div class="t" style="left:1846.9px;top:358.52px;font-size:11.5px;line-height:14px;color:#000;">скрыть</div>
<div class="r" style="left:350px;top:371px;width:1545px;height:29px;background:#7197b3;border-top:1px solid #bbb;border-left:1px solid #bbb"></div>
<div class="t" style="left:359px;top:375.64px;font-size:12px;line-height:15px;font-weight:bold;color:#000;">Политики</div>
<div class="t" style="left:1846.9px;top:388.52px;font-size:11.5px;line-height:14px;color:#000;">скрыть</div>
<div class="r" style="left:360px;top:400px;width:1535px;height:30px;background:#a0bacb;border-top:1px solid #bbb;border-left:1px solid #bbb"></div>
<div class="t" style="left:369px;top:404.64px;font-size:12px;line-height:15px;font-weight:bold;color:#000;">Конфигурация Windows</div>
<div class="t" style="left:1846.9px;top:417.52px;font-size:11.5px;line-height:14px;color:#000;">скрыть</div>
<div class="r" style="left:370px;top:430px;width:1525px;height:30px;background:#c0d2de;border-top:1px solid #bbb;border-left:1px solid #bbb"></div>
<div class="t" style="left:379px;top:434.64px;font-size:12px;line-height:15px;font-weight:bold;color:#000;">Параметры безопасности</div>
<div class="t" style="left:1846.9px;top:447.52px;font-size:11.5px;line-height:14px;color:#000;">скрыть</div>
<div class="r" style="left:380px;top:460px;width:1515px;height:30px;background:#d9e3ea;border-top:1px solid #bbb;border-left:1px solid #bbb"></div>
<div class="t" style="left:392px;top:464.64px;font-size:12px;line-height:15px;font-weight:bold;color:#000;">Политики учетных записей/Политика паролей</div>
<div class="t" style="left:1846.9px;top:477.52px;font-size:11.5px;line-height:14px;color:#000;">скрыть</div>
<div class="r" style="left:395px;top:490px;width:1500px;height:161px;background:#f9f9f9;border-left:1px solid #bbb"></div>
<div class="t" style="left:420px;top:499.34px;font-size:12px;line-height:15px;font-weight:bold;color:#000;">Политика</div>
<div class="t" style="left:1158px;top:499.34px;font-size:12px;line-height:15px;font-weight:bold;color:#000;">Параметр</div>
<div class="r" style="left:419px;top:515px;width:736px;height:1px;background:#ccc"></div>
<div class="r" style="left:1157px;top:515px;width:736px;height:1px;background:#ccc"></div>
<div class="t" style="left:420px;top:520.99px;font-size:11px;line-height:14px;color:#000;">Вести журнал паролей</div>
<div class="t" style="left:1158px;top:520.99px;font-size:11px;line-height:14px;color:#000;">сохранено паролей: 24</div>
<div class="t" style="left:420px;top:542.44px;font-size:11px;line-height:14px;color:#000;">Максимальный срок действия пароля</div>
<div class="t" style="left:1158px;top:542.44px;font-size:11px;line-height:14px;color:#000;">42 дн</div>
<div class="t" style="left:420px;top:563.89px;font-size:11px;line-height:14px;color:#000;">Минимальная длина пароля</div>
<div class="t" style="left:1158px;top:563.89px;font-size:11px;line-height:14px;color:#000;">знаков: 7</div>
<div class="t" style="left:420px;top:585.34px;font-size:11px;line-height:14px;color:#000;">Минимальный срок действия пароля</div>
<div class="t" style="left:1158px;top:585.34px;font-size:11px;line-height:14px;color:#000;">1 дн</div>
<div class="t" style="left:420px;top:606.79px;font-size:11px;line-height:14px;color:#000;">Пароль должен отвечать требованиям сложности</div>
<div class="t" style="left:1158px;top:606.79px;font-size:11px;line-height:14px;color:#000;">Включено</div>
<div class="t" style="left:420px;top:628.24px;font-size:11px;line-height:14px;color:#000;">Хранить пароли, используя обратимое шифрование</div>
<div class="t" style="left:1158px;top:628.24px;font-size:11px;line-height:14px;color:#000;">Отключено</div>
<div class="r" style="left:380px;top:651px;width:1515px;height:31px;background:#d9e3ea;border-top:1px solid #bbb;border-left:1px solid #bbb"></div>
<div class="t" style="left:392px;top:655.64px;font-size:12px;line-height:15px;font-weight:bold;color:#000;">Политики учетных записей/Политика блокировки учетных записей</div>
<div class="t" style="left:1836.7px;top:668.52px;font-size:11.5px;line-height:14px;color:#000;">показать</div>
<div class="r" style="left:380px;top:681px;width:1515px;height:30px;background:#d9e3ea;border-top:1px solid #bbb;border-left:1px solid #bbb"></div>
<div class="t" style="left:392px;top:685.64px;font-size:12px;line-height:15px;font-weight:bold;color:#000;">Политики учетных записей/Политика Kerberos</div>
<div class="t" style="left:1836.7px;top:698.52px;font-size:11.5px;line-height:14px;color:#000;">показать</div>
<div class="r" style="left:380px;top:710px;width:1515px;height:30px;background:#d9e3ea;border-top:1px solid #bbb;border-left:1px solid #bbb"></div>
<div class="t" style="left:392px;top:714.64px;font-size:12px;line-height:15px;font-weight:bold;color:#000;">Локальные политики/Параметры безопасности</div>
<div class="t" style="left:1836.7px;top:727.52px;font-size:11.5px;line-height:14px;color:#000;">показать</div>
<div class="r" style="left:380px;top:740px;width:1515px;height:30px;background:#d9e3ea;border-top:1px solid #bbb;border-left:1px solid #bbb"></div>
<div class="t" style="left:392px;top:744.64px;font-size:12px;line-height:15px;font-weight:bold;color:#000;">Политики работы с открытым ключом/Файловая система EFS</div>
<div class="t" style="left:1836.7px;top:757.52px;font-size:11.5px;line-height:14px;color:#000;text-decoration:underline">показать</div>
<div class="r" style="left:340px;top:772px;width:1555px;height:30px;background:#fef7d6;border-top:1px solid #bbb;border-left:1px solid #bbb"></div>
<div class="t" style="left:349px;top:776.64px;font-size:12px;line-height:15px;font-weight:bold;color:#3333cc;">Конфигурация пользователя (включено)</div>
<div class="t" style="left:1846.9px;top:789.52px;font-size:11.5px;line-height:14px;color:#000;">скрыть</div>
<div class="r" style="left:395px;top:801px;width:1500px;height:23px;background:#f9f9f9;border-left:1px solid #bbb;border-top:1px solid #bbb"></div>
<div class="t" style="left:417px;top:805.99px;font-size:11px;line-height:14px;color:#000;">Параметры не заданы.</div>
<div class="r" style="left:0px;top:913px;width:1919px;height:21px;background:#f0f0f0"></div>
<div class="r" style="left:1699px;top:914px;width:1px;height:20px;background:#d0d0d0"></div>
<div class="r" style="left:1832px;top:914px;width:1px;height:20px;background:#d0d0d0"></div>
<div class="r" style="left:1917px;top:914px;width:1px;height:20px;background:#d0d0d0"></div>
</body></html>
